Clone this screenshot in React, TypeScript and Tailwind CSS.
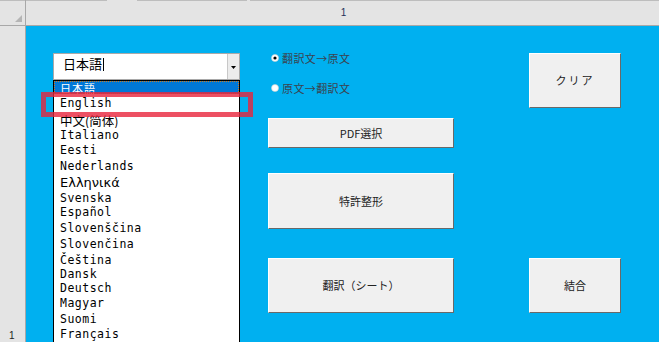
import React from "react";

const langs: { label: string; h: number; font?: string }[] = [
  { label: "日本語", h: 13 },
  { label: "English", h: 18 },
  { label: "中文(简体)", h: 16, font: "cjk" },
  { label: "Italiano", h: 14 },
  { label: "Eesti", h: 15 },
  { label: "Nederlands", h: 17 },
  { label: "Ελληνικά", h: 17, font: "greek" },
  { label: "Svenska", h: 13 },
  { label: "Español", h: 16 },
  { label: "Slovenščina", h: 16 },
  { label: "Slovenčina", h: 16 },
  { label: "Čeština", h: 15 },
  { label: "Dansk", h: 13 },
  { label: "Deutsch", h: 15 },
  { label: "Magyar", h: 16 },
  { label: "Suomi", h: 15 },
  { label: "Français", h: 16 },
];

function SheetButton({ label, className }: { label: string; className: string }) {
  return (
    <div
      className={`flex items-center justify-center border-t border-l border-t-white border-l-white border-r border-b border-r-[#696969] border-b-[#696969] bg-[#f0f0f0] text-[11px] text-[#222] ${className}`}
    >
      {label}
    </div>
  );
}

function Radio({ label, checked }: { label: string; checked?: boolean }) {
  return (
    <div className="flex h-[10px] items-center gap-[3px] text-[11px] leading-none tracking-[0.4px] text-[#3a4450]">
      <svg width="8" height="8" viewBox="0 0 8 8" className="ml-[3px]">
        <circle cx="4" cy="4" r="3.5" fill="#fff" stroke="#d0d0d0" strokeWidth="0.6" />
        {checked && <circle cx="4" cy="4" r="1.6" fill="#000" />}
      </svg>
      <span>{label}</span>
    </div>
  );
}

export default function App() {
  return (
    <div
      className="relative h-[342px] w-[659px] overflow-hidden bg-[#e4e4e4]"
      style={{ fontFamily: '"Noto Sans CJK JP", "Noto Sans", sans-serif' }}
    >
      {/* column header */}
      <div className="flex h-[26px]">
        <div className="relative h-[26px] w-[26px] border-r border-b border-[#a8a8a8]">
          <div className="h-px w-full bg-[#bdbdbd]" />
          <svg width="7" height="7" viewBox="0 0 7 7" className="absolute left-[15px] top-[15px]">
            <polygon points="7,0 7,7 0,7" fill="#b5b5b5" />
          </svg>
        </div>
        <div className="flex flex-1 flex-col border-b border-[#a8a8a8]">
          <div className="flex h-px">
            <div className="w-[81px] bg-[#bdbdbd]" />
            <div className="w-[30px]" />
            <div className="w-[110px] bg-[#bdbdbd]" />
            <div className="w-[3px]" />
            <div className="flex-1 bg-[#bdbdbd]" />
          </div>
          <div className="flex flex-1 items-center justify-center pl-[2px] text-[10px] leading-none text-[#1f2f5a]" style={{ fontFamily: '"Liberation Sans", sans-serif' }}>
            1
          </div>
        </div>
      </div>

      <div className="flex h-[316px]">
        {/* row header */}
        <div className="flex w-[26px] flex-col justify-end border-r border-[#a8a8a8] pb-[1px]">
          <div className="pl-[9px] text-[10px] leading-[10px] text-[#222]" style={{ fontFamily: '"Liberation Sans", sans-serif' }}>
            1
          </div>
        </div>

        {/* sheet */}
        <div className="flex flex-1 overflow-hidden bg-[#00b0f0] pl-[27px] pt-[27px]">
          {/* language picker */}
          <div className="flex w-[187px] shrink-0 flex-col">
            <div className="flex h-[27px] border border-[#a9a9a9] bg-white">
              <div className="flex flex-1 items-start pl-[9px] pt-[3px] text-[13px] leading-[14px] text-black">
                日本語
                <span className="ml-[1px] mt-[1px] h-[13px] w-px bg-black" />
              </div>
              <div className="flex h-[25px] w-[12px] items-center justify-center border-l border-[#c8c8c8] bg-[#ececec]">
                <svg width="5" height="3" viewBox="0 0 5 3" className="mt-[1px]">
                  <polygon points="0,0 5,0 2.5,3" fill="#000" />
                </svg>
              </div>
            </div>
            <div
              className="flex flex-1 flex-col border border-black bg-white text-[11.5px] text-black"
              style={{ fontFamily: '"DejaVu Sans Mono", "Noto Sans CJK JP", monospace' }}
            >
              {langs.map((l, i) => (
                <div
                  key={l.label}
                  style={{ height: l.h }}
                  className={`flex shrink-0 items-center overflow-hidden pl-[6px] leading-none ${
                    i === 0 ? "bg-[#0078d7] text-white outline-1 outline-dotted outline-offset-[-1px] outline-[#d07a20]" : ""
                  }`}
                >
                  <span
                    className={
                      l.font === "cjk"
                        ? "block text-[12.5px] leading-[13px] [font-family:'Noto_Sans_CJK_SC',sans-serif]"
                        : l.font === "greek"
                          ? "block text-[13px] leading-[14px] [font-family:'DejaVu_Sans',sans-serif]"
                          : i === 0
                            ? "block pt-[1px] text-[11px] leading-[11px] tracking-[1px] [font-family:'Noto_Sans_CJK_JP',sans-serif]"
                            : "block leading-[12px] tracking-[0.5px]"
                    }
                  >
                    {l.label}
                  </span>
                </div>
              ))}
            </div>
          </div>

          {/* middle controls */}
          <div className="ml-[28px] flex w-[186px] shrink-0 flex-col">
            <Radio label="翻訳文→原文" checked />
            <div className="mt-[20px]">
              <Radio label="原文→翻訳文" />
            </div>
            <SheetButton label="PDF選択" className="mt-[25px] h-[30px]" />
            <SheetButton label="特許整形" className="mt-[25px] h-[56px]" />
            <SheetButton label="翻訳（シート）" className="mt-[29px] h-[55px]" />
          </div>

          {/* right controls */}
          <div className="ml-[75px] flex w-[92px] shrink-0 flex-col">
            <SheetButton label="クリア" className="h-[55px] tracking-[2px]" />
            <SheetButton label="結合" className="mt-[150px] h-[55px]" />
          </div>
        </div>
      </div>

      {/* annotation highlight */}
      <div className="absolute left-[41px] top-[92px] h-[25px] w-[212px] border-[5px] border-[rgba(232,36,60,0.8)]" />
    </div>
  );
}
